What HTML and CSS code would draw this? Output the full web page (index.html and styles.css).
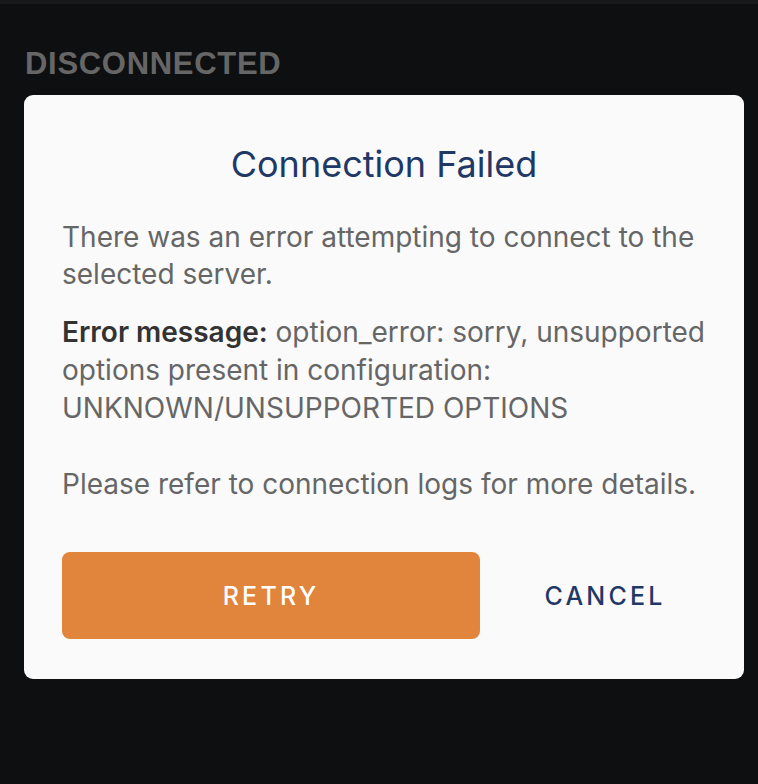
FILE: index.html
```html
<!DOCTYPE html>
<html>
<head>
<meta charset="utf-8">
<link rel="stylesheet" href="styles.css">
</head>
<body>
<div class="topbar"></div>
<main class="page">
  <h2 class="status">DISCONNECTED</h2>
  <div class="modal">
    <h1 class="title">Connection Failed</h1>
    <p class="text text-intro">There was an error attempting to connect to the selected server.</p>
    <p class="text text-detail"><strong>Error message:</strong> option_error: sorry, unsupported options present in configuration: UNKNOWN/UNSUPPORTED OPTIONS<br><br>Please refer to connection logs for more details.</p>
    <div class="actions">
      <button class="btn btn-primary">RETRY</button>
      <button class="btn btn-text">CANCEL</button>
    </div>
  </div>
</main>
</body>
</html>
```
FILE: styles.css
```css
html, body {
  margin: 0;
  padding: 0;
  background: #0e0f11;
  height: 100%;
}
body {
  font-family: Inter, "Noto Sans", sans-serif;
}
.topbar {
  height: 4px;
  background: #17191b;
}
.page {
  padding: 0 14px 0 24px;
}
.status {
  margin: 0;
  padding: 42px 0 13px 1px;
  font-family: "Liberation Sans", Arial, sans-serif;
  font-weight: 700;
  font-size: 31px;
  line-height: 36px;
  color: #666666;
  letter-spacing: 0.7px;
}
.modal {
  width: 720px;
  box-sizing: border-box;
  background: #fafafa;
  border-radius: 9px;
  padding: 47px 38px 40px 38px;
}
.title {
  margin: 0 0 33px 0;
  text-align: center;
  font-weight: 400;
  font-size: 36px;
  line-height: 44px;
  color: #1f3866;
}
.text {
  margin: 0;
  font-size: 28px;
  color: #666666;
}
.text-intro {
  line-height: 37px;
  margin-bottom: 20px;
}
.text-detail {
  line-height: 38px;
}
.text strong {
  color: #333333;
  font-weight: 600;
}
.actions {
  display: flex;
  align-items: center;
  gap: 20px;
  margin-top: 49px;
}
.btn {
  font-family: Inter, sans-serif;
  font-size: 25px;
  letter-spacing: 3.2px;
  font-weight: 500;
  border: none;
  cursor: pointer;
  padding: 0;
}
.btn-primary {
  width: 418px;
  height: 87px;
  background: #e0853b;
  color: #ffffff;
  border-radius: 8px;
}
.btn-text {
  flex: 1;
  height: 87px;
  background: transparent;
  color: #1f3866;
  padding-left: 4px;
}
```
